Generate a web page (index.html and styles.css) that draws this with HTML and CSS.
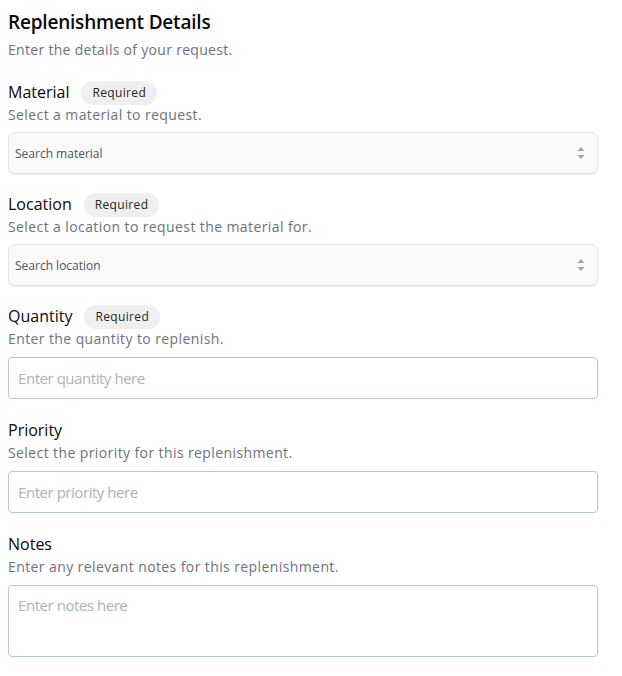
FILE: index.html
```html
<!DOCTYPE html>
<html lang="en">
<head>
<meta charset="utf-8">
<title>Replenishment Details</title>
<link rel="stylesheet" href="styles.css">
</head>
<body>
<main class="page">
  <h1 class="title">Replenishment Details</h1>
  <p class="subtitle">Enter the details of your request.</p>

  <section class="fields">
    <div class="field">
      <div class="label-row"><span class="label">Material</span><span class="badge">Required</span></div>
      <div class="help">Select a material to request.</div>
      <div class="select">
        <span class="select-text">Search material</span>
        <svg class="chev" width="8" height="14" viewBox="0 0 8 14"><path d="M4 1 L7.5 5 H0.5 Z M4 13 L7.5 9 H0.5 Z" fill="#9ca3af"/></svg>
      </div>
    </div>

    <div class="field">
      <div class="label-row"><span class="label">Location</span><span class="badge">Required</span></div>
      <div class="help">Select a location to request the material for.</div>
      <div class="select">
        <span class="select-text">Search location</span>
        <svg class="chev" width="8" height="14" viewBox="0 0 8 14"><path d="M4 1 L7.5 5 H0.5 Z M4 13 L7.5 9 H0.5 Z" fill="#9ca3af"/></svg>
      </div>
    </div>

    <div class="field">
      <div class="label-row"><span class="label">Quantity</span><span class="badge">Required</span></div>
      <div class="help">Enter the quantity to replenish.</div>
      <input class="input" type="text" placeholder="Enter quantity here">
    </div>

    <div class="field">
      <div class="label-row"><span class="label">Priority</span></div>
      <div class="help">Select the priority for this replenishment.</div>
      <input class="input" type="text" placeholder="Enter priority here">
    </div>

    <div class="field">
      <div class="label-row"><span class="label">Notes</span></div>
      <div class="help">Enter any relevant notes for this replenishment.</div>
      <textarea class="input textarea" placeholder="Enter notes here"></textarea>
    </div>
  </section>
</main>
</body>
</html>
```

FILE: styles.css
```css
* { box-sizing: border-box; }
html, body { margin: 0; padding: 0; background: #ffffff; }
body {
  font-family: "Open Sans", "Noto Sans", "Liberation Sans", sans-serif;
  color: #111111;
}
.page {
  width: 590px;
  margin-left: 8px;
  padding-top: 8px;
}
.title {
  margin: 0;
  font-size: 19px;
  line-height: 28px;
  font-weight: 600;
  letter-spacing: -0.2px;
  color: #0a0a0a;
}
.subtitle {
  margin: 4px 0 0;
  font-size: 14px;
  line-height: 20px;
  letter-spacing: 0.3px;
  color: #6b7280;
}
.fields {
  margin-top: 21px;
  display: flex;
  flex-direction: column;
  gap: 19px;
}
.field {
  display: flex;
  flex-direction: column;
}
.label-row {
  height: 24px;
  display: flex;
  align-items: center;
  gap: 12px;
}
.label {
  font-size: 16px;
  line-height: 24px;
  padding-bottom: 2px;
  color: #0a0a0a;
}
.badge {
  height: 24px;
  padding: 0 11px;
  border-radius: 12px;
  background: #efefef;
  font-size: 12px;
  line-height: 24px;
  letter-spacing: 0.35px;
  color: #27272a;
}
.help {
  font-size: 14px;
  line-height: 20px;
  letter-spacing: 0.4px;
  color: #6b7280;
}
.select {
  margin-top: 7px;
  height: 42px;
  border: 1px solid #e4e4e7;
  border-radius: 7px;
  background: #fafafa;
  box-shadow: 0 1px 1px rgba(0,0,0,0.07);
  display: flex;
  align-items: center;
  justify-content: space-between;
  padding: 0 12px 0 6px;
}
.select-text {
  font-size: 12px;
  letter-spacing: 0;
  color: #4b5563;
}
.chev { display: block; }
.input {
  margin-top: 8px;
  margin-bottom: 1px;
  width: 100%;
  height: 42px;
  border: 1px solid #b8c3d6;
  border-radius: 4px;
  background: #ffffff;
  padding: 0 9px;
  font-family: inherit;
  font-size: 15px;
  letter-spacing: -0.45px;
  color: #111;
  outline: none;
}
.input::placeholder { color: #aab2bf; }
.textarea {
  height: 72px;
  padding-top: 9px;
  resize: none;
  display: block;
}
```
